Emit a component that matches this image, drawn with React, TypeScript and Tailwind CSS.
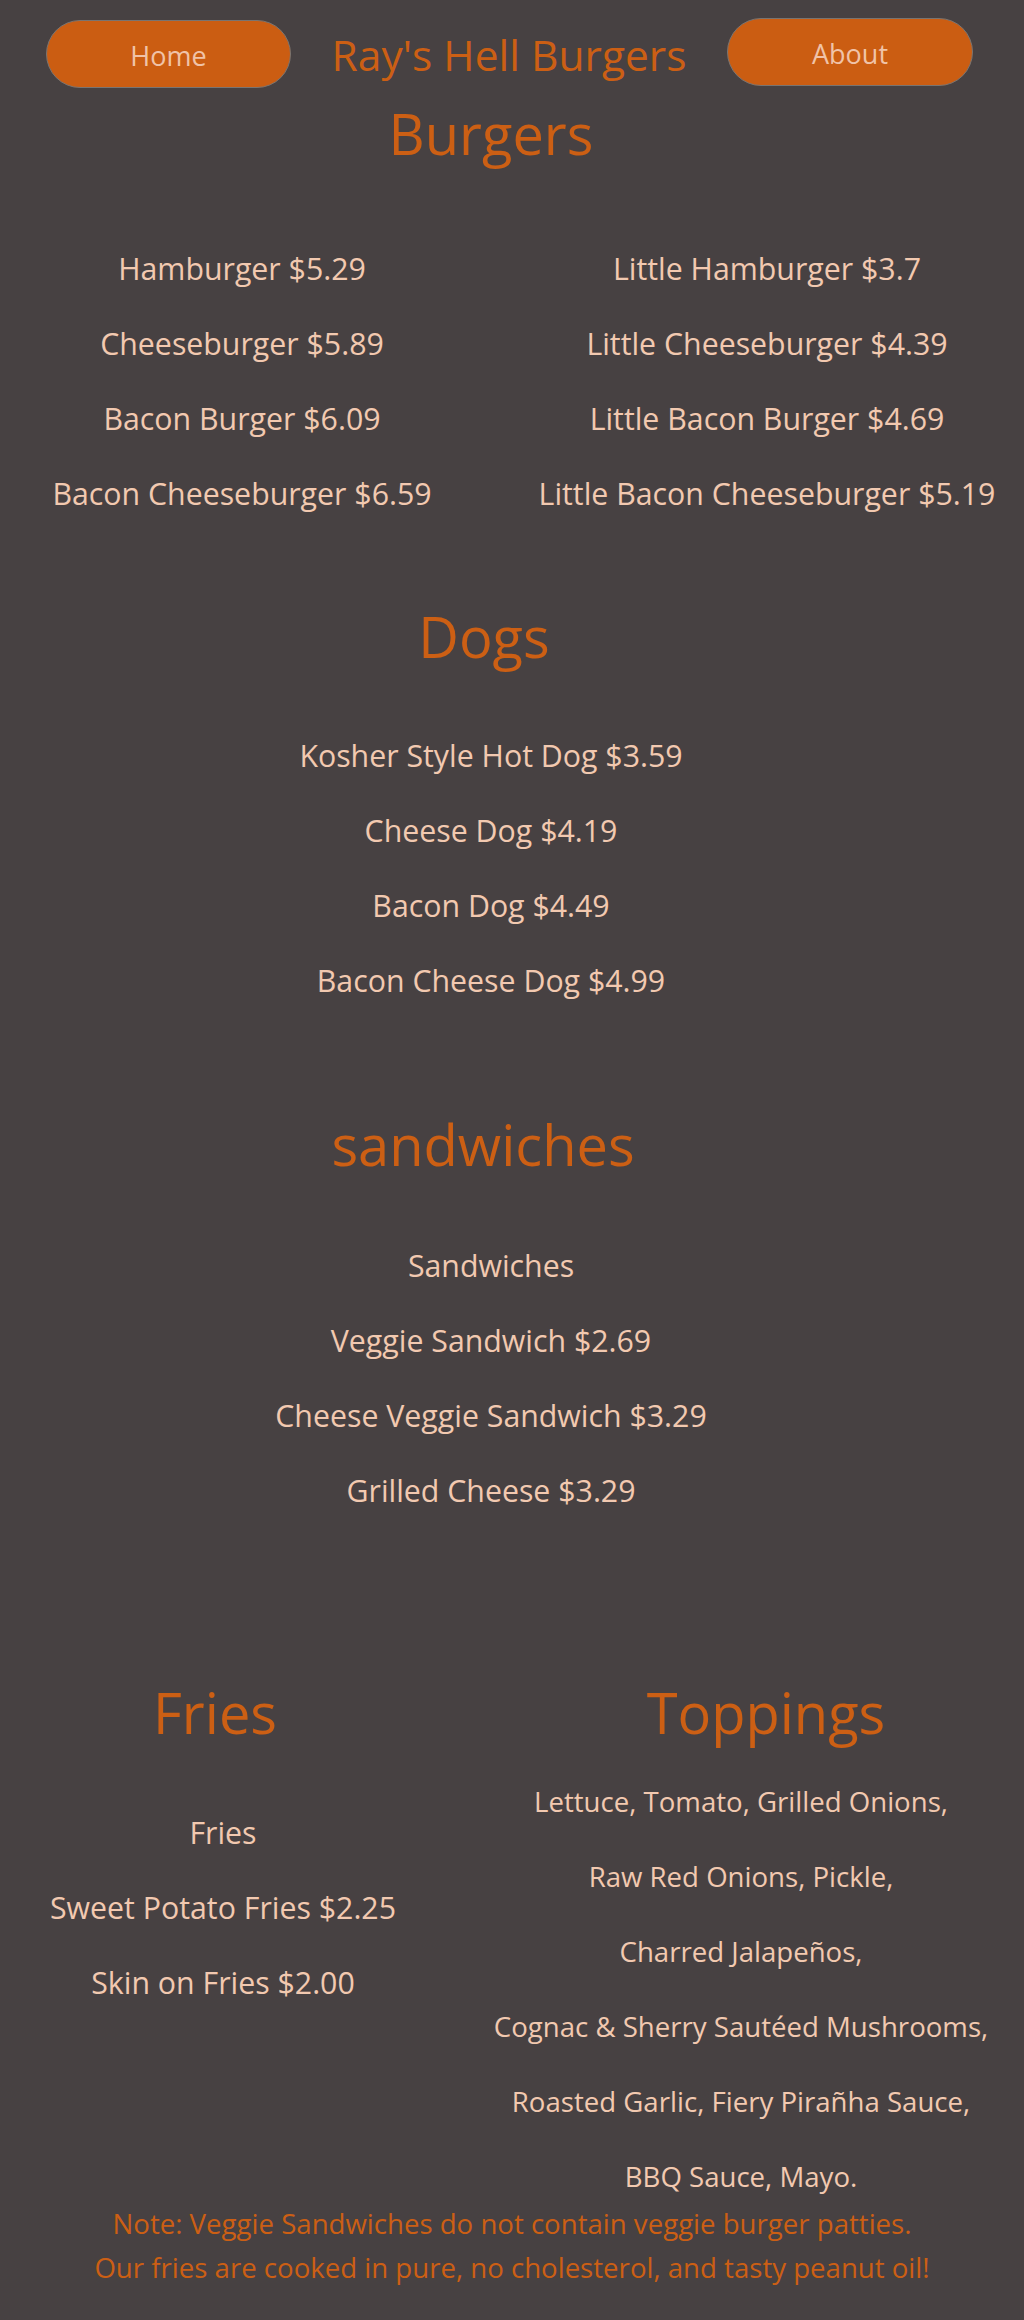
import React from "react";

const burgersLeft = [
  "Hamburger $5.29",
  "Cheeseburger $5.89",
  "Bacon Burger $6.09",
  "Bacon Cheeseburger $6.59",
];
const burgersRight = [
  "Little Hamburger $3.7",
  "Little Cheeseburger $4.39",
  "Little Bacon Burger $4.69",
  "Little Bacon Cheeseburger $5.19",
];
const dogs = [
  "Kosher Style Hot Dog $3.59",
  "Cheese Dog $4.19",
  "Bacon Dog $4.49",
  "Bacon Cheese Dog $4.99",
];
const sandwiches = [
  "Sandwiches",
  "Veggie Sandwich $2.69",
  "Cheese Veggie Sandwich $3.29",
  "Grilled Cheese $3.29",
];
const fries = ["Fries", "Sweet Potato Fries $2.25", "Skin on Fries $2.00"];
const toppings = [
  "Lettuce, Tomato, Grilled Onions,",
  "Raw Red Onions, Pickle,",
  "Charred Jalapeños,",
  "Cognac & Sherry Sautéed Mushrooms,",
  "Roasted Garlic, Fiery Pirañha Sauce,",
  "BBQ Sauce, Mayo.",
];

function ItemList({ items, small }: { items: string[]; small?: boolean }) {
  return (
    <ul className="flex flex-col gap-[32px]">
      {items.map((t) => (
        <li
          key={t}
          className={
            (small ? "text-[27.6px] " : "text-[30.3px] ") +
            "leading-[43px] text-center text-[#f2c9b0] whitespace-nowrap"
          }
        >
          {t}
        </li>
      ))}
    </ul>
  );
}

function Heading({ children, className }: { children: React.ReactNode; className?: string }) {
  return (
    <h2
      className={
        "text-[56px] leading-[64px] text-center text-[#cc5f14] font-normal " +
        (className ?? "")
      }
    >
      {children}
    </h2>
  );
}

export default function App() {
  return (
    <div
      className="w-full min-h-[2320px] bg-[#474142]"
      style={{ fontFamily: '"Open Sans", "Noto Sans", sans-serif' }}
    >
      {/* Header */}
      <header className="flex items-start justify-between pt-[18px] pl-[46px] pr-[51px]">
        <button className="mt-[2px] flex h-[68px] w-[245px] items-center justify-center rounded-full border border-[#7a7470] bg-[#cb5d12] pt-[3px] text-[27px] leading-[36px] text-[#f0c3a8]">
          Home
        </button>
        <h1 className="mt-[13px] text-[42.5px] leading-[48px] text-[#cc5f14] font-normal whitespace-nowrap">
          Ray's Hell Burgers
        </h1>
        <button className="flex h-[68px] w-[246px] items-center justify-center rounded-full border border-[#7a7470] bg-[#cb5d12] pt-[3px] text-[27px] leading-[36px] text-[#f0c3a8]">
          About
        </button>
      </header>

      {/* Burgers */}
      <section className="mt-[13px]">
        <Heading className="pr-[42px]">Burgers</Heading>
        <div className="mt-[82px] grid grid-cols-[484px_484px] gap-x-[41px]">
          <ItemList items={burgersLeft} />
          <ItemList items={burgersRight} />
        </div>
      </section>

      {/* Dogs */}
      <section className="mt-[89px]">
        <Heading className="pr-[56px]">Dogs</Heading>
        <div className="mt-[66px] pr-[42px]">
          <ItemList items={dogs} />
        </div>
      </section>

      {/* Sandwiches */}
      <section className="mt-[110px]">
        <Heading className="pr-[58px]">sandwiches</Heading>
        <div className="mt-[68px] pr-[42px]">
          <ItemList items={sandwiches} />
        </div>
      </section>

      {/* Fries & Toppings */}
      <section className="mt-[168px] flex items-start">
        <div className="w-[446px]">
          <Heading className="pr-[16px]">Fries</Heading>
          <div className="mt-[67px]">
            <ItemList items={fries} />
          </div>
        </div>
        <div className="ml-[36px] w-[518px]">
          <Heading className="pl-[50px]">Toppings</Heading>
          <div className="mt-[36px]">
            <ItemList items={toppings} small />
          </div>
        </div>
      </section>

      {/* Notes */}
      <footer className="mt-[3px] text-center text-[27.6px] leading-[44px] text-[#cc5f14]">
        <p>Note: Veggie Sandwiches do not contain veggie burger patties.</p>
        <p>Our fries are cooked in pure, no cholesterol, and tasty peanut oil!</p>
      </footer>
    </div>
  );
}
